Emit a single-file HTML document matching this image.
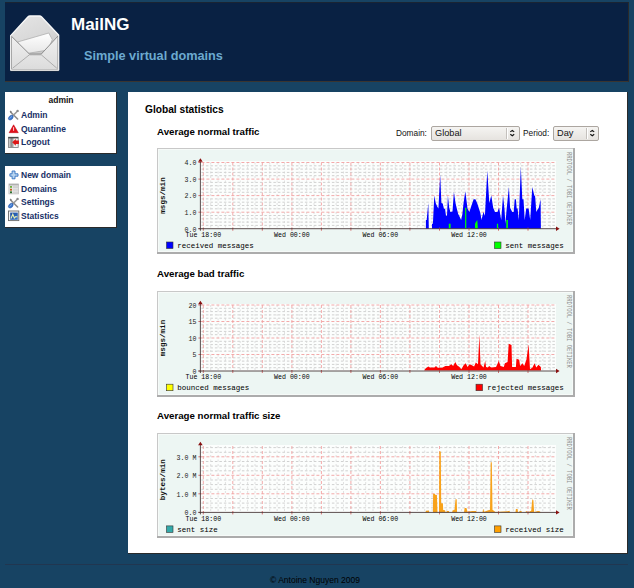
<!DOCTYPE html>
<html><head><meta charset="utf-8"><title>MailNG</title>
<style>
html,body{margin:0;padding:0;}
body{width:634px;height:588px;background:#174363;position:relative;overflow:hidden;font-family:"Liberation Sans",sans-serif;}
.abs{position:absolute;}
#header{left:5px;top:2px;width:623px;height:78px;background:#092143;border-top:1px solid #1a2433;border-right:1px solid #2a2a2a;border-bottom:1px solid #3a3530;}
.t{position:absolute;white-space:nowrap;line-height:1;}
.box{position:absolute;background:#fff;}
.menu a{color:#172f66;text-decoration:none;font-weight:bold;}
.sel{position:absolute;height:13px;border:1px solid #aca6a0;border-radius:2px;background:linear-gradient(#f5f4f2,#e6e3df);box-sizing:border-box;}
</style></head><body>
<div id="header" class="abs">
<svg class="abs" style="left:3px;top:9px" width="54" height="62" viewBox="0 0 54 62">
 <defs>
  <linearGradient id="eb" x1="0.2" y1="0" x2="0.6" y2="1"><stop offset="0" stop-color="#e4e4e4"/><stop offset="0.45" stop-color="#d8d8d8"/><stop offset="1" stop-color="#bdbdbd"/></linearGradient>
  <linearGradient id="ef" x1="0" y1="0" x2="0" y2="1"><stop offset="0" stop-color="#f0f0f0"/><stop offset="1" stop-color="#dcdcdc"/></linearGradient>
  <linearGradient id="el" x1="0" y1="0" x2="0" y2="1"><stop offset="0" stop-color="#ffffff"/><stop offset="1" stop-color="#e6e6e6"/></linearGradient>
 </defs>
 <path d="M2.7,58.6 L50.6,58.6" stroke="#3c3c3c" stroke-width="1.4"/>
 <path d="M2.7,23.6 L19.8,5 Q20.8,4 22,4 L31.5,4 Q32.7,4 33.7,5 L50.6,23 L50.6,58 L2.7,58 Z" fill="url(#eb)" stroke="#f8f8f8" stroke-width="1.3" stroke-linejoin="round"/>
 <path d="M9.5,30 L40.8,21 L44.3,27.6 L40,38 L16,42 Z" fill="url(#el)" stroke="#a8a8a8" stroke-width="0.7"/>
 <path d="M3.4,24.2 L21.4,42 L33.3,42 L50,24 L50,57.6 L3.4,57.6 Z" fill="url(#ef)" stroke="#8e8e8e" stroke-width="1" stroke-linejoin="round"/>
 <path d="M4.6,56.2 L21.4,42.8 L33.3,42.8 L48.8,56.2" fill="none" stroke="#a0a0a0" stroke-width="0.8"/>
 <path d="M2.7,23.6 L2.7,58 L50.6,58 L50.6,23" fill="none" stroke="#efefef" stroke-width="1"/>
</svg>
</div>
<div class="t" style="left:71px;top:15.8px;font-size:17px;font-weight:bold;color:#fff;">MailNG</div>
<div class="t" style="left:84px;top:50.3px;font-size:12.7px;font-weight:bold;color:#6caad0;">Simple virtual domains</div>

<div class="box" style="left:5px;top:92px;width:111px;height:61px;border-right:1px solid #2a2a2a;border-bottom:1px solid #2a2a2a;"></div>
<div class="t" style="left:5px;width:112px;text-align:center;top:95.5px;font-size:8.5px;font-weight:bold;color:#111;">admin</div>
<div class="menu">
<div class="t" style="left:21px;top:111px;font-size:8.5px;"><a>Admin</a></div>
<div class="t" style="left:21px;top:124.8px;font-size:8.5px;"><a>Quarantine</a></div>
<div class="t" style="left:21px;top:138.2px;font-size:8.5px;"><a>Logout</a></div>
</div>

<div class="box" style="left:5px;top:166px;width:111px;height:61px;border-right:1px solid #2a2a2a;border-bottom:1px solid #2a2a2a;"></div>
<div class="menu">
<div class="t" style="left:21px;top:170.5px;font-size:8.5px;"><a>New domain</a></div>
<div class="t" style="left:21px;top:184.7px;font-size:8.5px;"><a>Domains</a></div>
<div class="t" style="left:21px;top:198px;font-size:8.5px;"><a>Settings</a></div>
<div class="t" style="left:21px;top:212px;font-size:8.5px;"><a>Statistics</a></div>
</div>


<svg class="abs" style="left:0;top:0" width="30" height="230" viewBox="0 0 30 230">
 <defs>
  <linearGradient id="door" x1="0" y1="0" x2="1" y2="0"><stop offset="0" stop-color="#d8d8d8"/><stop offset="0.5" stop-color="#8a8a8a"/><stop offset="1" stop-color="#b0b0b0"/></linearGradient>
  <linearGradient id="statbg" x1="0" y1="0" x2="1" y2="1"><stop offset="0" stop-color="#1a4aa0"/><stop offset="1" stop-color="#3a78c8"/></linearGradient>
 </defs>
 <!-- tools icon (Admin) -->
 <g id="tools">
  <path d="M10.8,112.2 L17.6,119" stroke="#8c8c8c" stroke-width="1.6" stroke-linecap="round"/>
  <path d="M17.4,111.2 L11.2,117.4" stroke="#9a9a9a" stroke-width="1.5" stroke-linecap="round"/>
  <path d="M9.6,111.4 L10.6,110.6 L12,112 L11,113 Z" fill="#7c7c7c"/>
  <circle cx="17.6" cy="110.9" r="1.2" fill="#8a8a8a"/>
  <path d="M11.2,115.2 Q13.2,115 13.2,117 Q12.6,119.6 10.2,120 Q8.2,120 8.4,118.2 Q9,116 11.2,115.2 Z" fill="#3a78d0" stroke="#1d50a8" stroke-width="0.6"/>
  <path d="M9.6,118.6 Q10.4,117 12,116.4" stroke="#a8c8f0" stroke-width="0.6" fill="none"/>
 </g>
 <use href="#tools" transform="translate(0,88)"/>
 <!-- warning -->
 <path d="M13.6,124.8 L18.3,132.7 L9.1,132.7 Z" fill="#e0101a" stroke="#c00010" stroke-width="0.5" stroke-linejoin="round"/>
 <rect x="13.1" y="127.2" width="1" height="3.6" fill="#ffd8d8"/>
 <!-- logout -->
 <rect x="8.4" y="137.2" width="9.8" height="10.4" fill="#f0f0f0" stroke="#7a7a7a" stroke-width="0.8"/>
 <rect x="9" y="138" width="4.6" height="9" fill="url(#door)"/>
 <rect x="8.4" y="137" width="9.8" height="1.4" fill="#4a4a4a"/>
 <path d="M12.2,142.3 L15.8,139 L15.8,140.6 L18.9,140.6 L18.9,144 L15.8,144 L15.8,145.8 Z" fill="#dd1515"/>
 <!-- plus -->
 <path d="M12.1,171 L15,171 L15,173.8 L18,173.8 L18,176.2 L15,176.2 L15,178.8 L12.1,178.8 L12.1,176.2 L9.9,176.2 L9.9,173.8 L12.1,173.8 Z" fill="#b8d4f0" stroke="#3270c0" stroke-width="0.9" stroke-linejoin="round"/>
 <!-- domains list -->
 <rect x="8.9" y="183.9" width="9.7" height="10" fill="#e6e6e6" stroke="#b8b8b8" stroke-width="0.7"/>
 <rect x="9" y="184" width="9.5" height="1.4" fill="#b0b0b0"/>
 <rect x="13" y="186.2" width="5" height="2" fill="#d0d0d0"/>
 <rect x="13" y="189" width="5" height="1.8" fill="#d8d8d8"/>
 <rect x="13" y="191.6" width="5" height="1.8" fill="#d4d4d4"/>
 <rect x="10" y="186" width="2" height="1.8" fill="#6fb040"/>
 <rect x="10" y="188.8" width="2" height="1.8" fill="#c06020"/>
 <rect x="10" y="191.4" width="2" height="1.8" fill="#2f7030"/>
 <!-- statistics -->
 <rect x="8.5" y="211" width="10.3" height="9.6" fill="#f4f4f4" stroke="#6a6a6a" stroke-width="0.9"/>
 <rect x="10.2" y="212.6" width="7.6" height="7.2" fill="url(#statbg)"/>
 <path d="M11,218.5 L12.8,214.2 L14.3,218 L15.8,216.5 L17.4,217" fill="none" stroke="#e8f0b0" stroke-width="1.1"/>
</svg>

<div class="box" style="left:128px;top:92px;width:499px;height:461px;border-right:1px solid #2a2a2a;border-bottom:1px solid #2a2a2a;"></div>
<div class="t" style="left:145px;top:104.8px;font-size:10.2px;font-weight:bold;color:#000;">Global statistics</div>
<div class="t" style="left:157px;top:126.5px;font-size:9.7px;font-weight:bold;color:#000;">Average normal traffic</div>
<div class="t" style="left:157px;top:268.5px;font-size:9.7px;font-weight:bold;color:#000;">Average bad traffic</div>
<div class="t" style="left:157px;top:411px;font-size:9.7px;font-weight:bold;color:#000;">Average normal traffic size</div>

<div class="t" style="left:396px;top:128.5px;font-size:8.3px;color:#111;">Domain:</div>
<div class="sel" style="left:431px;top:126px;width:89px;height:14.5px;"></div>
<div class="abs" style="left:506px;top:128px;width:1px;height:11px;background:#c4c0bc;border-right:1px solid #fff;"></div>
<svg class="abs" style="left:509px;top:129px" width="7" height="8" viewBox="0 0 7 8"><path d="M1.3,2.9 L3.3,1.4 L5.2,2.9 M1.3,5.2 L3.3,6.7 L5.2,5.2" fill="none" stroke="#111" stroke-width="1.15"/></svg>
<div class="t" style="left:435px;top:129.3px;font-size:9.2px;color:#111;">Global</div>
<div class="t" style="left:523px;top:128.5px;font-size:8.3px;color:#111;">Period:</div>
<div class="sel" style="left:553px;top:126px;width:46px;height:14.5px;"></div>
<div class="abs" style="left:586px;top:128px;width:1px;height:11px;background:#c4c0bc;border-right:1px solid #fff;"></div>
<svg class="abs" style="left:589px;top:129px" width="7" height="8" viewBox="0 0 7 8"><path d="M1.3,2.9 L3.3,1.4 L5.2,2.9 M1.3,5.2 L3.3,6.7 L5.2,5.2" fill="none" stroke="#111" stroke-width="1.15"/></svg>
<div class="t" style="left:557px;top:129.3px;font-size:9.2px;color:#111;">Day</div>

<svg style="position:absolute;left:157px;top:148px" width="418" height="106" viewBox="0 0 418 106" shape-rendering="crispEdges">
<rect x="0" y="0" width="418" height="106" fill="#acacac"/>
<rect x="0" y="0" width="416" height="104" fill="#c8c8c8"/>
<rect x="1" y="1" width="415" height="103" fill="#f6faf8"/>
<rect x="2" y="2" width="413" height="101" fill="#edf6f3"/>
<rect x="43.400000000000006" y="13.0" width="355.6" height="67.69999999999999" fill="#fcfefd"/>
<g stroke="#c2c2c2" stroke-width="0.75" stroke-dasharray="2.5 2" shape-rendering="auto"><line x1="44.400000000000006" y1="77.4" x2="399.0" y2="77.4"/><line x1="44.400000000000006" y1="74.1" x2="399.0" y2="74.1"/><line x1="44.400000000000006" y1="70.8" x2="399.0" y2="70.8"/><line x1="44.400000000000006" y1="67.5" x2="399.0" y2="67.5"/><line x1="44.400000000000006" y1="60.8" x2="399.0" y2="60.8"/><line x1="44.400000000000006" y1="57.5" x2="399.0" y2="57.5"/><line x1="44.400000000000006" y1="54.2" x2="399.0" y2="54.2"/><line x1="44.400000000000006" y1="50.9" x2="399.0" y2="50.9"/><line x1="44.400000000000006" y1="44.3" x2="399.0" y2="44.3"/><line x1="44.400000000000006" y1="41.0" x2="399.0" y2="41.0"/><line x1="44.400000000000006" y1="37.7" x2="399.0" y2="37.7"/><line x1="44.400000000000006" y1="34.4" x2="399.0" y2="34.4"/><line x1="44.400000000000006" y1="27.7" x2="399.0" y2="27.7"/><line x1="44.400000000000006" y1="24.4" x2="399.0" y2="24.4"/><line x1="44.400000000000006" y1="21.1" x2="399.0" y2="21.1"/><line x1="44.400000000000006" y1="17.8" x2="399.0" y2="17.8"/></g>
<g stroke="#d4d4d4" stroke-width="0.7" stroke-dasharray="2 2.5" shape-rendering="auto"><line x1="53.7" y1="14.5" x2="53.7" y2="80.69999999999999"/><line x1="61.1" y1="14.5" x2="61.1" y2="80.69999999999999"/><line x1="68.4" y1="14.5" x2="68.4" y2="80.69999999999999"/><line x1="83.2" y1="14.5" x2="83.2" y2="80.69999999999999"/><line x1="90.6" y1="14.5" x2="90.6" y2="80.69999999999999"/><line x1="98.0" y1="14.5" x2="98.0" y2="80.69999999999999"/><line x1="112.7" y1="14.5" x2="112.7" y2="80.69999999999999"/><line x1="120.1" y1="14.5" x2="120.1" y2="80.69999999999999"/><line x1="127.5" y1="14.5" x2="127.5" y2="80.69999999999999"/><line x1="142.2" y1="14.5" x2="142.2" y2="80.69999999999999"/><line x1="149.6" y1="14.5" x2="149.6" y2="80.69999999999999"/><line x1="157.0" y1="14.5" x2="157.0" y2="80.69999999999999"/><line x1="171.8" y1="14.5" x2="171.8" y2="80.69999999999999"/><line x1="179.1" y1="14.5" x2="179.1" y2="80.69999999999999"/><line x1="186.5" y1="14.5" x2="186.5" y2="80.69999999999999"/><line x1="201.3" y1="14.5" x2="201.3" y2="80.69999999999999"/><line x1="208.7" y1="14.5" x2="208.7" y2="80.69999999999999"/><line x1="216.0" y1="14.5" x2="216.0" y2="80.69999999999999"/><line x1="230.8" y1="14.5" x2="230.8" y2="80.69999999999999"/><line x1="238.2" y1="14.5" x2="238.2" y2="80.69999999999999"/><line x1="245.6" y1="14.5" x2="245.6" y2="80.69999999999999"/><line x1="260.3" y1="14.5" x2="260.3" y2="80.69999999999999"/><line x1="267.7" y1="14.5" x2="267.7" y2="80.69999999999999"/><line x1="275.1" y1="14.5" x2="275.1" y2="80.69999999999999"/><line x1="289.8" y1="14.5" x2="289.8" y2="80.69999999999999"/><line x1="297.2" y1="14.5" x2="297.2" y2="80.69999999999999"/><line x1="304.6" y1="14.5" x2="304.6" y2="80.69999999999999"/><line x1="319.4" y1="14.5" x2="319.4" y2="80.69999999999999"/><line x1="326.7" y1="14.5" x2="326.7" y2="80.69999999999999"/><line x1="334.1" y1="14.5" x2="334.1" y2="80.69999999999999"/><line x1="348.9" y1="14.5" x2="348.9" y2="80.69999999999999"/><line x1="356.3" y1="14.5" x2="356.3" y2="80.69999999999999"/><line x1="363.6" y1="14.5" x2="363.6" y2="80.69999999999999"/><line x1="378.4" y1="14.5" x2="378.4" y2="80.69999999999999"/><line x1="385.8" y1="14.5" x2="385.8" y2="80.69999999999999"/><line x1="393.2" y1="14.5" x2="393.2" y2="80.69999999999999"/></g>
<g stroke="#f2a0a0" stroke-width="0.9" stroke-dasharray="3 2" shape-rendering="auto"><line x1="44.400000000000006" y1="14.5" x2="399.0" y2="14.5"/><line x1="44.400000000000006" y1="31.1" x2="399.0" y2="31.1"/><line x1="44.400000000000006" y1="47.6" x2="399.0" y2="47.6"/><line x1="44.400000000000006" y1="64.2" x2="399.0" y2="64.2"/><line x1="46.3" y1="14.5" x2="46.3" y2="80.69999999999999"/><line x1="75.8" y1="14.5" x2="75.8" y2="80.69999999999999"/><line x1="105.3" y1="14.5" x2="105.3" y2="80.69999999999999"/><line x1="134.9" y1="14.5" x2="134.9" y2="80.69999999999999"/><line x1="164.4" y1="14.5" x2="164.4" y2="80.69999999999999"/><line x1="193.9" y1="14.5" x2="193.9" y2="80.69999999999999"/><line x1="223.4" y1="14.5" x2="223.4" y2="80.69999999999999"/><line x1="252.9" y1="14.5" x2="252.9" y2="80.69999999999999"/><line x1="282.5" y1="14.5" x2="282.5" y2="80.69999999999999"/><line x1="312.0" y1="14.5" x2="312.0" y2="80.69999999999999"/><line x1="341.5" y1="14.5" x2="341.5" y2="80.69999999999999"/><line x1="371.0" y1="14.5" x2="371.0" y2="80.69999999999999"/></g>
<polygon points="268.9,80.7 268.9,72.0 269.7,72.0 271.3,54.9 271.8,80.7 275.0,80.7 275.0,75.7 275.9,75.7 277.3,47.5 278.7,54.9 280.2,58.6 281.4,60.4 283.2,26.7 284.4,54.9 285.7,55.5 286.9,60.4 288.1,61.0 289.0,67.8 290.0,67.8 290.9,47.5 292.2,59.8 293.4,64.1 295.5,63.5 296.9,43.9 298.5,54.9 299.8,60.4 301.2,65.9 302.5,68.4 304.1,72.0 305.3,66.5 306.5,55.5 308.3,43.2 309.5,52.4 310.5,60.4 312.3,64.1 313.5,60.4 316.6,51.2 318.4,51.2 320.3,55.5 321.5,59.2 323.3,64.7 324.5,72.0 326.4,64.1 327.9,67.8 330.3,22.4 332.3,54.9 334.3,47.5 336.2,59.8 338.0,64.1 340.5,64.1 342.1,59.8 344.2,72.0 346.0,47.5 347.5,61.0 348.4,75.7 349.7,60.4 351.9,39.0 353.1,59.8 355.2,64.1 356.7,64.1 357.7,51.2 358.9,51.2 359.7,60.4 360.6,60.4 361.8,72.0 363.8,18.7 365.3,51.2 366.5,51.2 367.7,72.0 369.2,60.4 371.6,60.4 373.2,72.0 375.3,39.0 377.3,47.5 378.1,48.2 379.3,64.1 380.6,61.6 381.8,59.8 383.6,51.2 383.9,80.7" fill="#0000ff" shape-rendering="auto"/>
<polygon points="291.8,80.7 291.8,75.7 293.6,75.7 293.6,80.7" fill="#00ff00" shape-rendering="auto"/>
<polygon points="308.1,80.7 308.1,59.8 309.3,59.8 309.3,80.7" fill="#00ff00" shape-rendering="auto"/>
<polygon points="318.0,80.7 318.0,75.5 320.3,72.0 320.9,80.7" fill="#00ff00" shape-rendering="auto"/>
<polygon points="339.9,80.7 339.9,75.7 341.1,75.7 341.1,80.7" fill="#00ff00" shape-rendering="auto"/>
<polygon points="349.3,80.7 349.3,72.0 350.9,72.0 350.9,80.7" fill="#00ff00" shape-rendering="auto"/>
<g stroke="#d06060" stroke-width="0.9" shape-rendering="auto"><line x1="46.3" y1="79.69999999999999" x2="46.3" y2="82.69999999999999"/><line x1="75.8" y1="79.69999999999999" x2="75.8" y2="82.69999999999999"/><line x1="105.3" y1="79.69999999999999" x2="105.3" y2="82.69999999999999"/><line x1="134.9" y1="79.69999999999999" x2="134.9" y2="82.69999999999999"/><line x1="164.4" y1="79.69999999999999" x2="164.4" y2="82.69999999999999"/><line x1="193.9" y1="79.69999999999999" x2="193.9" y2="82.69999999999999"/><line x1="223.4" y1="79.69999999999999" x2="223.4" y2="82.69999999999999"/><line x1="252.9" y1="79.69999999999999" x2="252.9" y2="82.69999999999999"/><line x1="282.5" y1="79.69999999999999" x2="282.5" y2="82.69999999999999"/><line x1="312.0" y1="79.69999999999999" x2="312.0" y2="82.69999999999999"/><line x1="341.5" y1="79.69999999999999" x2="341.5" y2="82.69999999999999"/><line x1="371.0" y1="79.69999999999999" x2="371.0" y2="82.69999999999999"/></g>
<g stroke="#d06060" stroke-width="0.9" shape-rendering="auto"><line x1="41.400000000000006" y1="14.5" x2="44.400000000000006" y2="14.5"/><line x1="41.400000000000006" y1="31.1" x2="44.400000000000006" y2="31.1"/><line x1="41.400000000000006" y1="47.6" x2="44.400000000000006" y2="47.6"/><line x1="41.400000000000006" y1="64.2" x2="44.400000000000006" y2="64.2"/><line x1="41.400000000000006" y1="80.7" x2="44.400000000000006" y2="80.7"/></g>
<line x1="41.400000000000006" y1="80.69999999999999" x2="400.0" y2="80.69999999999999" stroke="#4a3a3a" stroke-width="0.9" shape-rendering="auto"/>
<line x1="43.400000000000006" y1="82.69999999999999" x2="43.400000000000006" y2="13.5" stroke="#4a3a3a" stroke-width="0.9" shape-rendering="auto"/>
<polygon points="41.10000000000001,13.7 45.7,13.7 43.400000000000006,10.2" fill="#8a1010" shape-rendering="auto"/>
<polygon points="399.0,78.49999999999999 399.0,82.89999999999999 402.6,80.69999999999999" fill="#8a1010" shape-rendering="auto"/>
<text x="39.400000000000006" y="17.3" text-anchor="end" font-family="Liberation Mono" font-size="6.6" fill="#222">4.0</text>
<text x="39.400000000000006" y="33.9" text-anchor="end" font-family="Liberation Mono" font-size="6.6" fill="#222">3.0</text>
<text x="39.400000000000006" y="50.4" text-anchor="end" font-family="Liberation Mono" font-size="6.6" fill="#222">2.0</text>
<text x="39.400000000000006" y="67.0" text-anchor="end" font-family="Liberation Mono" font-size="6.6" fill="#222">1.0</text>
<text x="39.400000000000006" y="83.5" text-anchor="end" font-family="Liberation Mono" font-size="6.6" fill="#222">0.0</text>
<text x="46.3" y="89.1" text-anchor="middle" font-family="Liberation Mono" font-size="6.6" fill="#000">Tue 18:00</text>
<text x="134.9" y="89.1" text-anchor="middle" font-family="Liberation Mono" font-size="6.6" fill="#000">Wed 00:00</text>
<text x="223.4" y="89.1" text-anchor="middle" font-family="Liberation Mono" font-size="6.6" fill="#000">Wed 06:00</text>
<text x="312.0" y="89.1" text-anchor="middle" font-family="Liberation Mono" font-size="6.6" fill="#000">Wed 12:00</text>
<text transform="translate(7.5,47.5) rotate(-90)" text-anchor="middle" font-family="Liberation Mono" font-size="7.6" font-weight="bold" fill="#111">msgs/min</text>
<text transform="translate(409.8,3.9) rotate(90)" font-family="Liberation Mono" font-size="6.3" textLength="73" lengthAdjust="spacingAndGlyphs" fill="#909090">RRDTOOL / TOBI OETIKER</text>
<rect x="9.5" y="94.0" width="6.5" height="6.5" fill="#0000ff" stroke="#333" stroke-width="0.6" shape-rendering="auto"/>
<text x="20.2" y="99.8" font-family="Liberation Mono" font-size="7.5" fill="#000">received messages</text>
<rect x="337.5" y="94.0" width="6.5" height="6.5" fill="#00ff00" stroke="#333" stroke-width="0.6" shape-rendering="auto"/>
<text x="406.7" y="99.8" text-anchor="end" font-family="Liberation Mono" font-size="7.5" fill="#000">sent messages</text>
</svg>
<svg style="position:absolute;left:157px;top:291px" width="418" height="106" viewBox="0 0 418 106" shape-rendering="crispEdges">
<rect x="0" y="0" width="418" height="106" fill="#acacac"/>
<rect x="0" y="0" width="416" height="104" fill="#c8c8c8"/>
<rect x="1" y="1" width="415" height="103" fill="#f6faf8"/>
<rect x="2" y="2" width="413" height="101" fill="#edf6f3"/>
<rect x="43.400000000000006" y="12.5" width="355.6" height="67.5" fill="#fcfefd"/>
<g stroke="#c2c2c2" stroke-width="0.75" stroke-dasharray="2.5 2" shape-rendering="auto"><line x1="44.400000000000006" y1="76.7" x2="399.0" y2="76.7"/><line x1="44.400000000000006" y1="73.4" x2="399.0" y2="73.4"/><line x1="44.400000000000006" y1="70.1" x2="399.0" y2="70.1"/><line x1="44.400000000000006" y1="66.8" x2="399.0" y2="66.8"/><line x1="44.400000000000006" y1="60.2" x2="399.0" y2="60.2"/><line x1="44.400000000000006" y1="56.9" x2="399.0" y2="56.9"/><line x1="44.400000000000006" y1="53.6" x2="399.0" y2="53.6"/><line x1="44.400000000000006" y1="50.3" x2="399.0" y2="50.3"/><line x1="44.400000000000006" y1="43.7" x2="399.0" y2="43.7"/><line x1="44.400000000000006" y1="40.4" x2="399.0" y2="40.4"/><line x1="44.400000000000006" y1="37.1" x2="399.0" y2="37.1"/><line x1="44.400000000000006" y1="33.8" x2="399.0" y2="33.8"/><line x1="44.400000000000006" y1="27.2" x2="399.0" y2="27.2"/><line x1="44.400000000000006" y1="23.9" x2="399.0" y2="23.9"/><line x1="44.400000000000006" y1="20.6" x2="399.0" y2="20.6"/><line x1="44.400000000000006" y1="17.3" x2="399.0" y2="17.3"/></g>
<g stroke="#d4d4d4" stroke-width="0.7" stroke-dasharray="2 2.5" shape-rendering="auto"><line x1="53.7" y1="14.0" x2="53.7" y2="80.0"/><line x1="61.1" y1="14.0" x2="61.1" y2="80.0"/><line x1="68.4" y1="14.0" x2="68.4" y2="80.0"/><line x1="83.2" y1="14.0" x2="83.2" y2="80.0"/><line x1="90.6" y1="14.0" x2="90.6" y2="80.0"/><line x1="98.0" y1="14.0" x2="98.0" y2="80.0"/><line x1="112.7" y1="14.0" x2="112.7" y2="80.0"/><line x1="120.1" y1="14.0" x2="120.1" y2="80.0"/><line x1="127.5" y1="14.0" x2="127.5" y2="80.0"/><line x1="142.2" y1="14.0" x2="142.2" y2="80.0"/><line x1="149.6" y1="14.0" x2="149.6" y2="80.0"/><line x1="157.0" y1="14.0" x2="157.0" y2="80.0"/><line x1="171.8" y1="14.0" x2="171.8" y2="80.0"/><line x1="179.1" y1="14.0" x2="179.1" y2="80.0"/><line x1="186.5" y1="14.0" x2="186.5" y2="80.0"/><line x1="201.3" y1="14.0" x2="201.3" y2="80.0"/><line x1="208.7" y1="14.0" x2="208.7" y2="80.0"/><line x1="216.0" y1="14.0" x2="216.0" y2="80.0"/><line x1="230.8" y1="14.0" x2="230.8" y2="80.0"/><line x1="238.2" y1="14.0" x2="238.2" y2="80.0"/><line x1="245.6" y1="14.0" x2="245.6" y2="80.0"/><line x1="260.3" y1="14.0" x2="260.3" y2="80.0"/><line x1="267.7" y1="14.0" x2="267.7" y2="80.0"/><line x1="275.1" y1="14.0" x2="275.1" y2="80.0"/><line x1="289.8" y1="14.0" x2="289.8" y2="80.0"/><line x1="297.2" y1="14.0" x2="297.2" y2="80.0"/><line x1="304.6" y1="14.0" x2="304.6" y2="80.0"/><line x1="319.4" y1="14.0" x2="319.4" y2="80.0"/><line x1="326.7" y1="14.0" x2="326.7" y2="80.0"/><line x1="334.1" y1="14.0" x2="334.1" y2="80.0"/><line x1="348.9" y1="14.0" x2="348.9" y2="80.0"/><line x1="356.3" y1="14.0" x2="356.3" y2="80.0"/><line x1="363.6" y1="14.0" x2="363.6" y2="80.0"/><line x1="378.4" y1="14.0" x2="378.4" y2="80.0"/><line x1="385.8" y1="14.0" x2="385.8" y2="80.0"/><line x1="393.2" y1="14.0" x2="393.2" y2="80.0"/></g>
<g stroke="#f2a0a0" stroke-width="0.9" stroke-dasharray="3 2" shape-rendering="auto"><line x1="44.400000000000006" y1="14.0" x2="399.0" y2="14.0"/><line x1="44.400000000000006" y1="30.5" x2="399.0" y2="30.5"/><line x1="44.400000000000006" y1="47.0" x2="399.0" y2="47.0"/><line x1="44.400000000000006" y1="63.5" x2="399.0" y2="63.5"/><line x1="46.3" y1="14.0" x2="46.3" y2="80.0"/><line x1="75.8" y1="14.0" x2="75.8" y2="80.0"/><line x1="105.3" y1="14.0" x2="105.3" y2="80.0"/><line x1="134.9" y1="14.0" x2="134.9" y2="80.0"/><line x1="164.4" y1="14.0" x2="164.4" y2="80.0"/><line x1="193.9" y1="14.0" x2="193.9" y2="80.0"/><line x1="223.4" y1="14.0" x2="223.4" y2="80.0"/><line x1="252.9" y1="14.0" x2="252.9" y2="80.0"/><line x1="282.5" y1="14.0" x2="282.5" y2="80.0"/><line x1="312.0" y1="14.0" x2="312.0" y2="80.0"/><line x1="341.5" y1="14.0" x2="341.5" y2="80.0"/><line x1="371.0" y1="14.0" x2="371.0" y2="80.0"/></g>
<polygon points="267.2,79.6 268.5,77.6 271.3,75.4 272.9,76.5 277.4,76.5 279.0,74.9 280.7,76.8 285.1,76.8 288.4,74.9 291.7,74.9 294.5,73.2 296.1,74.9 298.3,71.0 300.0,74.3 302.2,75.7 304.4,78.2 306.6,74.3 308.8,72.2 310.5,76.0 312.7,73.2 314.9,74.3 317.1,75.4 318.8,71.5 321.0,73.2 322.4,43.4 323.5,73.2 326.5,76.5 328.2,70.1 329.1,76.0 330.8,76.6 332.2,74.9 334.1,76.6 339.0,76.0 341.8,70.0 343.5,74.9 346.8,76.0 347.9,72.2 350.6,71.0 351.7,52.8 354.5,53.9 355.1,76.0 358.9,76.0 359.5,67.7 362.2,68.8 363.1,74.9 365.5,72.2 367.2,74.9 369.4,68.8 371.6,53.4 373.0,78.2 375.5,76.6 377.5,72.2 379.3,76.6 381.5,73.8 383.8,76.0 384.1,79.6" fill="#ff0000" shape-rendering="auto"/>
<g stroke="#d06060" stroke-width="0.9" shape-rendering="auto"><line x1="46.3" y1="79.0" x2="46.3" y2="82.0"/><line x1="75.8" y1="79.0" x2="75.8" y2="82.0"/><line x1="105.3" y1="79.0" x2="105.3" y2="82.0"/><line x1="134.9" y1="79.0" x2="134.9" y2="82.0"/><line x1="164.4" y1="79.0" x2="164.4" y2="82.0"/><line x1="193.9" y1="79.0" x2="193.9" y2="82.0"/><line x1="223.4" y1="79.0" x2="223.4" y2="82.0"/><line x1="252.9" y1="79.0" x2="252.9" y2="82.0"/><line x1="282.5" y1="79.0" x2="282.5" y2="82.0"/><line x1="312.0" y1="79.0" x2="312.0" y2="82.0"/><line x1="341.5" y1="79.0" x2="341.5" y2="82.0"/><line x1="371.0" y1="79.0" x2="371.0" y2="82.0"/></g>
<g stroke="#d06060" stroke-width="0.9" shape-rendering="auto"><line x1="41.400000000000006" y1="14.0" x2="44.400000000000006" y2="14.0"/><line x1="41.400000000000006" y1="30.5" x2="44.400000000000006" y2="30.5"/><line x1="41.400000000000006" y1="47.0" x2="44.400000000000006" y2="47.0"/><line x1="41.400000000000006" y1="63.5" x2="44.400000000000006" y2="63.5"/><line x1="41.400000000000006" y1="80.0" x2="44.400000000000006" y2="80.0"/></g>
<line x1="41.400000000000006" y1="80.0" x2="400.0" y2="80.0" stroke="#4a3a3a" stroke-width="0.9" shape-rendering="auto"/>
<line x1="43.400000000000006" y1="82.0" x2="43.400000000000006" y2="13.0" stroke="#4a3a3a" stroke-width="0.9" shape-rendering="auto"/>
<polygon points="41.10000000000001,13.2 45.7,13.2 43.400000000000006,9.7" fill="#8a1010" shape-rendering="auto"/>
<polygon points="399.0,77.8 399.0,82.2 402.6,80.0" fill="#8a1010" shape-rendering="auto"/>
<text x="39.400000000000006" y="16.8" text-anchor="end" font-family="Liberation Mono" font-size="6.6" fill="#222">20</text>
<text x="39.400000000000006" y="33.3" text-anchor="end" font-family="Liberation Mono" font-size="6.6" fill="#222">15</text>
<text x="39.400000000000006" y="49.8" text-anchor="end" font-family="Liberation Mono" font-size="6.6" fill="#222">10</text>
<text x="39.400000000000006" y="66.3" text-anchor="end" font-family="Liberation Mono" font-size="6.6" fill="#222">5</text>
<text x="39.400000000000006" y="82.8" text-anchor="end" font-family="Liberation Mono" font-size="6.6" fill="#222">0</text>
<text x="46.3" y="88.4" text-anchor="middle" font-family="Liberation Mono" font-size="6.6" fill="#000">Tue 18:00</text>
<text x="134.9" y="88.4" text-anchor="middle" font-family="Liberation Mono" font-size="6.6" fill="#000">Wed 00:00</text>
<text x="223.4" y="88.4" text-anchor="middle" font-family="Liberation Mono" font-size="6.6" fill="#000">Wed 06:00</text>
<text x="312.0" y="88.4" text-anchor="middle" font-family="Liberation Mono" font-size="6.6" fill="#000">Wed 12:00</text>
<text transform="translate(7.5,47.0) rotate(-90)" text-anchor="middle" font-family="Liberation Mono" font-size="7.6" font-weight="bold" fill="#111">msgs/min</text>
<text transform="translate(409.8,3.9) rotate(90)" font-family="Liberation Mono" font-size="6.3" textLength="73" lengthAdjust="spacingAndGlyphs" fill="#909090">RRDTOOL / TOBI OETIKER</text>
<rect x="9.5" y="93.2" width="6.5" height="6.5" fill="#ffff00" stroke="#333" stroke-width="0.6" shape-rendering="auto"/>
<text x="20.2" y="99.0" font-family="Liberation Mono" font-size="7.5" fill="#000">bounced messages</text>
<rect x="319.0" y="93.2" width="6.5" height="6.5" fill="#ff0000" stroke="#333" stroke-width="0.6" shape-rendering="auto"/>
<text x="406.7" y="99.0" text-anchor="end" font-family="Liberation Mono" font-size="7.5" fill="#000">rejected messages</text>
</svg>
<svg style="position:absolute;left:157px;top:433px" width="418" height="105" viewBox="0 0 418 105" shape-rendering="crispEdges">
<rect x="0" y="0" width="418" height="105" fill="#acacac"/>
<rect x="0" y="0" width="416" height="103" fill="#c8c8c8"/>
<rect x="1" y="1" width="415" height="102" fill="#f6faf8"/>
<rect x="2" y="2" width="413" height="100" fill="#edf6f3"/>
<rect x="43.400000000000006" y="11.5" width="355.6" height="67.89999999999998" fill="#fcfefd"/>
<g stroke="#c2c2c2" stroke-width="0.75" stroke-dasharray="2.5 2" shape-rendering="auto"><line x1="44.400000000000006" y1="74.8" x2="399.0" y2="74.8"/><line x1="44.400000000000006" y1="70.1" x2="399.0" y2="70.1"/><line x1="44.400000000000006" y1="65.5" x2="399.0" y2="65.5"/><line x1="44.400000000000006" y1="56.3" x2="399.0" y2="56.3"/><line x1="44.400000000000006" y1="51.6" x2="399.0" y2="51.6"/><line x1="44.400000000000006" y1="47.0" x2="399.0" y2="47.0"/><line x1="44.400000000000006" y1="37.8" x2="399.0" y2="37.8"/><line x1="44.400000000000006" y1="33.1" x2="399.0" y2="33.1"/><line x1="44.400000000000006" y1="28.5" x2="399.0" y2="28.5"/><line x1="44.400000000000006" y1="19.3" x2="399.0" y2="19.3"/><line x1="44.400000000000006" y1="14.6" x2="399.0" y2="14.6"/></g>
<g stroke="#d4d4d4" stroke-width="0.7" stroke-dasharray="2 2.5" shape-rendering="auto"><line x1="53.7" y1="13.0" x2="53.7" y2="79.39999999999998"/><line x1="61.1" y1="13.0" x2="61.1" y2="79.39999999999998"/><line x1="68.4" y1="13.0" x2="68.4" y2="79.39999999999998"/><line x1="83.2" y1="13.0" x2="83.2" y2="79.39999999999998"/><line x1="90.6" y1="13.0" x2="90.6" y2="79.39999999999998"/><line x1="98.0" y1="13.0" x2="98.0" y2="79.39999999999998"/><line x1="112.7" y1="13.0" x2="112.7" y2="79.39999999999998"/><line x1="120.1" y1="13.0" x2="120.1" y2="79.39999999999998"/><line x1="127.5" y1="13.0" x2="127.5" y2="79.39999999999998"/><line x1="142.2" y1="13.0" x2="142.2" y2="79.39999999999998"/><line x1="149.6" y1="13.0" x2="149.6" y2="79.39999999999998"/><line x1="157.0" y1="13.0" x2="157.0" y2="79.39999999999998"/><line x1="171.8" y1="13.0" x2="171.8" y2="79.39999999999998"/><line x1="179.1" y1="13.0" x2="179.1" y2="79.39999999999998"/><line x1="186.5" y1="13.0" x2="186.5" y2="79.39999999999998"/><line x1="201.3" y1="13.0" x2="201.3" y2="79.39999999999998"/><line x1="208.7" y1="13.0" x2="208.7" y2="79.39999999999998"/><line x1="216.0" y1="13.0" x2="216.0" y2="79.39999999999998"/><line x1="230.8" y1="13.0" x2="230.8" y2="79.39999999999998"/><line x1="238.2" y1="13.0" x2="238.2" y2="79.39999999999998"/><line x1="245.6" y1="13.0" x2="245.6" y2="79.39999999999998"/><line x1="260.3" y1="13.0" x2="260.3" y2="79.39999999999998"/><line x1="267.7" y1="13.0" x2="267.7" y2="79.39999999999998"/><line x1="275.1" y1="13.0" x2="275.1" y2="79.39999999999998"/><line x1="289.8" y1="13.0" x2="289.8" y2="79.39999999999998"/><line x1="297.2" y1="13.0" x2="297.2" y2="79.39999999999998"/><line x1="304.6" y1="13.0" x2="304.6" y2="79.39999999999998"/><line x1="319.4" y1="13.0" x2="319.4" y2="79.39999999999998"/><line x1="326.7" y1="13.0" x2="326.7" y2="79.39999999999998"/><line x1="334.1" y1="13.0" x2="334.1" y2="79.39999999999998"/><line x1="348.9" y1="13.0" x2="348.9" y2="79.39999999999998"/><line x1="356.3" y1="13.0" x2="356.3" y2="79.39999999999998"/><line x1="363.6" y1="13.0" x2="363.6" y2="79.39999999999998"/><line x1="378.4" y1="13.0" x2="378.4" y2="79.39999999999998"/><line x1="385.8" y1="13.0" x2="385.8" y2="79.39999999999998"/><line x1="393.2" y1="13.0" x2="393.2" y2="79.39999999999998"/></g>
<g stroke="#f2a0a0" stroke-width="0.9" stroke-dasharray="3 2" shape-rendering="auto"><line x1="44.400000000000006" y1="23.8" x2="399.0" y2="23.8"/><line x1="44.400000000000006" y1="42.3" x2="399.0" y2="42.3"/><line x1="44.400000000000006" y1="60.8" x2="399.0" y2="60.8"/><line x1="46.3" y1="13.0" x2="46.3" y2="79.39999999999998"/><line x1="75.8" y1="13.0" x2="75.8" y2="79.39999999999998"/><line x1="105.3" y1="13.0" x2="105.3" y2="79.39999999999998"/><line x1="134.9" y1="13.0" x2="134.9" y2="79.39999999999998"/><line x1="164.4" y1="13.0" x2="164.4" y2="79.39999999999998"/><line x1="193.9" y1="13.0" x2="193.9" y2="79.39999999999998"/><line x1="223.4" y1="13.0" x2="223.4" y2="79.39999999999998"/><line x1="252.9" y1="13.0" x2="252.9" y2="79.39999999999998"/><line x1="282.5" y1="13.0" x2="282.5" y2="79.39999999999998"/><line x1="312.0" y1="13.0" x2="312.0" y2="79.39999999999998"/><line x1="341.5" y1="13.0" x2="341.5" y2="79.39999999999998"/><line x1="371.0" y1="13.0" x2="371.0" y2="79.39999999999998"/></g>
<polygon points="268.4,79.4 269.0,77.7 271.9,77.5 272.3,79.4 275.9,79.4 276.1,60.8 277.9,60.8 278.5,62.0 279.9,62.0 280.5,79.4 282.0,79.4 282.3,18.5 283.8,18.5 284.2,70.3 285.9,70.3 286.2,76.9 288.0,77.2 288.6,79.4 290.1,78.1 291.8,78.1 292.5,79.4 295.0,79.4 295.7,77.2 297.5,76.9 298.5,66.2 299.7,66.2 300.1,79.4 307.0,79.4 307.6,75.1 309.4,75.1 310.6,78.7 315.4,78.1 319.0,78.1 320.1,79.4 325.5,79.4 326.1,75.7 327.3,78.7 331.3,77.2 333.0,76.7 333.7,29.2 334.8,29.2 335.5,76.7 338.5,78.9 350.6,78.3 352.5,77.8 353.0,79.4 358.5,79.4 358.9,76.1 360.6,76.1 361.0,79.4 363.1,78.1 364.4,78.1 365.0,79.4 368.5,79.4 368.9,78.3 370.0,78.3 370.5,79.4 374.2,77.8 375.3,66.2 376.4,67.3 377.1,78.9 381.0,78.1 382.7,78.3 383.8,79.4" fill="#f8a21a" shape-rendering="auto"/>
<g stroke="#d06060" stroke-width="0.9" shape-rendering="auto"><line x1="46.3" y1="78.39999999999998" x2="46.3" y2="81.39999999999998"/><line x1="75.8" y1="78.39999999999998" x2="75.8" y2="81.39999999999998"/><line x1="105.3" y1="78.39999999999998" x2="105.3" y2="81.39999999999998"/><line x1="134.9" y1="78.39999999999998" x2="134.9" y2="81.39999999999998"/><line x1="164.4" y1="78.39999999999998" x2="164.4" y2="81.39999999999998"/><line x1="193.9" y1="78.39999999999998" x2="193.9" y2="81.39999999999998"/><line x1="223.4" y1="78.39999999999998" x2="223.4" y2="81.39999999999998"/><line x1="252.9" y1="78.39999999999998" x2="252.9" y2="81.39999999999998"/><line x1="282.5" y1="78.39999999999998" x2="282.5" y2="81.39999999999998"/><line x1="312.0" y1="78.39999999999998" x2="312.0" y2="81.39999999999998"/><line x1="341.5" y1="78.39999999999998" x2="341.5" y2="81.39999999999998"/><line x1="371.0" y1="78.39999999999998" x2="371.0" y2="81.39999999999998"/></g>
<g stroke="#d06060" stroke-width="0.9" shape-rendering="auto"><line x1="41.400000000000006" y1="23.8" x2="44.400000000000006" y2="23.8"/><line x1="41.400000000000006" y1="42.3" x2="44.400000000000006" y2="42.3"/><line x1="41.400000000000006" y1="60.8" x2="44.400000000000006" y2="60.8"/><line x1="41.400000000000006" y1="79.4" x2="44.400000000000006" y2="79.4"/></g>
<line x1="41.400000000000006" y1="79.39999999999998" x2="400.0" y2="79.39999999999998" stroke="#4a3a3a" stroke-width="0.9" shape-rendering="auto"/>
<line x1="43.400000000000006" y1="81.39999999999998" x2="43.400000000000006" y2="12.0" stroke="#4a3a3a" stroke-width="0.9" shape-rendering="auto"/>
<polygon points="41.10000000000001,12.2 45.7,12.2 43.400000000000006,8.7" fill="#8a1010" shape-rendering="auto"/>
<polygon points="399.0,77.19999999999997 399.0,81.59999999999998 402.6,79.39999999999998" fill="#8a1010" shape-rendering="auto"/>
<text x="39.400000000000006" y="26.6" text-anchor="end" font-family="Liberation Mono" font-size="6.6" fill="#222">3.0 M</text>
<text x="39.400000000000006" y="45.1" text-anchor="end" font-family="Liberation Mono" font-size="6.6" fill="#222">2.0 M</text>
<text x="39.400000000000006" y="63.6" text-anchor="end" font-family="Liberation Mono" font-size="6.6" fill="#222">1.0 M</text>
<text x="39.400000000000006" y="82.2" text-anchor="end" font-family="Liberation Mono" font-size="6.6" fill="#222">0.0</text>
<text x="46.3" y="87.8" text-anchor="middle" font-family="Liberation Mono" font-size="6.6" fill="#000">Tue 18:00</text>
<text x="134.9" y="87.8" text-anchor="middle" font-family="Liberation Mono" font-size="6.6" fill="#000">Wed 00:00</text>
<text x="223.4" y="87.8" text-anchor="middle" font-family="Liberation Mono" font-size="6.6" fill="#000">Wed 06:00</text>
<text x="312.0" y="87.8" text-anchor="middle" font-family="Liberation Mono" font-size="6.6" fill="#000">Wed 12:00</text>
<text transform="translate(7.5,46.7) rotate(-90)" text-anchor="middle" font-family="Liberation Mono" font-size="7.6" font-weight="bold" fill="#111">bytes/min</text>
<text transform="translate(409.8,3.9) rotate(90)" font-family="Liberation Mono" font-size="6.3" textLength="73" lengthAdjust="spacingAndGlyphs" fill="#909090">RRDTOOL / TOBI OETIKER</text>
<rect x="9.5" y="92.9" width="6.5" height="6.5" fill="#33aaaa" stroke="#333" stroke-width="0.6" shape-rendering="auto"/>
<text x="20.2" y="98.7" font-family="Liberation Mono" font-size="7.5" fill="#000">sent size</text>
<rect x="337.5" y="92.9" width="6.5" height="6.5" fill="#ffa000" stroke="#333" stroke-width="0.6" shape-rendering="auto"/>
<text x="406.7" y="98.7" text-anchor="end" font-family="Liberation Mono" font-size="7.5" fill="#000">received size</text>
</svg>

<div class="abs" style="left:5px;top:564px;width:623px;height:1px;background:#213650;"></div>
<div class="t" style="left:270px;top:576px;font-size:8.5px;color:#000;">&copy; Antoine Nguyen 2009</div>
</body></html>
